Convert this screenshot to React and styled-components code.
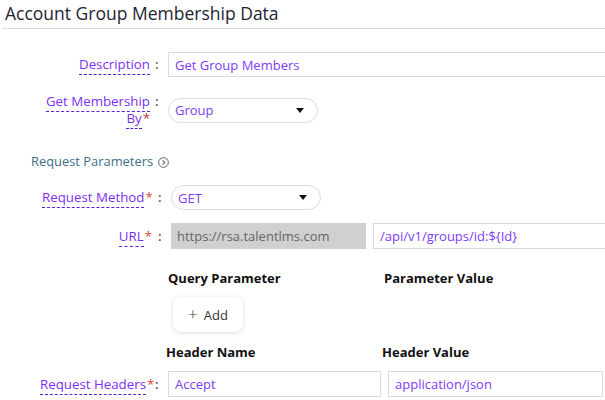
import styled, { createGlobalStyle } from "styled-components";

const GlobalStyle = createGlobalStyle`
  body {
    margin: 0;
    background: #fff;
    font-family: "Open Sans", "Liberation Sans", sans-serif;
    overflow: hidden;
  }
`;

export default function App() {
  return (
    <Page>
      <GlobalStyle />
      <Title>Account Group Membership Data</Title>

      <Row $top={23}>
        <Label>
          <LabelText>
            <Dashed>Description</Dashed>
          </LabelText>
          <Colon>:</Colon>
        </Label>
        <TextInput $width={460}>Get Group Members</TextInput>
      </Row>

      <Row $top={16}>
        <Label>
          <LabelText $wrap>
            <Dashed>Get Membership</Dashed> <Dashed>By</Dashed>
            <Star $dark>*</Star>
          </LabelText>
          <Colon>:</Colon>
        </Label>
        <Select>Group</Select>
      </Row>

      <SectionTitle>
        Request Parameters
        <svg width="11" height="11" viewBox="0 0 12 12">
          <circle cx="6" cy="6" r="5.3" fill="none" stroke="#555" strokeWidth="1" />
          <path d="M5 3.6 L7.4 6 L5 8.4" fill="none" stroke="#555" strokeWidth="1.1" />
        </svg>
      </SectionTitle>

      <Row $top={15} $labelWidth={163}>
        <Label>
          <LabelText>
            <Dashed>Request Method</Dashed>
            <Star>*</Star>
          </LabelText>
          <Colon $wide>:</Colon>
        </Label>
        <Select>GET</Select>
      </Row>

      <Row $top={13} $labelWidth={163}>
        <Label>
          <LabelText>
            <Dashed>URL</Dashed>
            <Star>*</Star>
          </LabelText>
          <Colon $wide>:</Colon>
        </Label>
        <UrlGroup>
          <BaseUrl>https://rsa.talentlms.com</BaseUrl>
          <TextInput $width={260} $height={26}>/api/v1/groups/id:${"{"}Id{"}"}</TextInput>
        </UrlGroup>
      </Row>

      <Row $top={21}>
        <span />
        <Headings>
          <Heading>Query Parameter</Heading>
          <Heading>Parameter Value</Heading>
        </Headings>
      </Row>

      <Row $top={10}>
        <span />
        <AddButton>
          <span>+</span> Add
        </AddButton>
      </Row>

      <Row $top={12}>
        <span />
        <Headings $shift={-2}>
          <Heading>Header Name</Heading>
          <Heading>Header Value</Heading>
        </Headings>
      </Row>

      <Row $top={10}>
        <Label>
          <LabelText>
            <Dashed>Request Headers</Dashed>
            <Star>*</Star>
          </LabelText>
          <Colon>:</Colon>
        </Label>
        <HeaderInputs>
          <TextInput $width={213} $height={26}>Accept</TextInput>
          <TextInput $width={215} $height={26}>application/json</TextInput>
        </HeaderInputs>
      </Row>
    </Page>
  );
}

const Page = styled.div`
  width: 605px;
  height: 400px;
  overflow: hidden;
  font-size: 13px;
`;

const Title = styled.h1`
  box-sizing: border-box;
  margin: 0 0 0 2px;
  height: 29px;
  padding-left: 3px;
  border-bottom: 1px solid #dcdcdc;
  font-size: 17.5px;
  font-weight: 400;
  line-height: 26px;
  color: #1c2433;
`;

const Row = styled.div`
  display: grid;
  grid-template-columns: ${(p) => p.$labelWidth || 160}px auto;
  column-gap: 8px;
  align-items: center;
  justify-content: start;
  margin-top: ${(p) => p.$top || 0}px;
`;

const Label = styled.div`
  display: flex;
  justify-content: flex-end;
  align-items: center;
  line-height: 17px;
`;

const LabelText = styled.div`
  max-width: 110px;
  text-align: right;
  font-size: 13.3px;
  color: #7b2ff7;
  white-space: ${(p) => (p.$wrap ? "normal" : "nowrap")};
`;

const Dashed = styled.span`
  border-bottom: 1px dashed #5a1fd6;
  padding-bottom: 1px;
`;

const Star = styled.span`
  color: ${(p) => (p.$dark ? "#b5303c" : "#e0413f")};
  margin-left: 1px;
`;

const Colon = styled.span`
  margin-left: ${(p) => (p.$wide ? 6 : 5)}px;
  width: 5px;
  color: #555;
  font-weight: 600;
  align-self: flex-start;
`;

const TextInput = styled.div`
  box-sizing: border-box;
  flex-shrink: 0;
  width: ${(p) => p.$width}px;
  height: ${(p) => p.$height || 25}px;
  border: 1px solid #dcdcdc;
  padding: 0 6px;
  display: flex;
  align-items: center;
  color: #7d3cf8;
  white-space: nowrap;
  overflow: hidden;
`;

const Select = styled.div`
  box-sizing: border-box;
  width: 150px;
  height: 25px;
  border: 1px solid #dcdcdc;
  border-radius: 13px;
  padding: 0 13px 0 6px;
  display: flex;
  align-items: center;
  justify-content: space-between;
  color: #7d3cf8;

  &::after {
    content: "";
    border-left: 4px solid transparent;
    border-right: 4px solid transparent;
    border-top: 5px solid #111;
  }
`;

const SectionTitle = styled.div`
  margin: 26px 0 0 31px;
  display: flex;
  align-items: center;
  gap: 5px;
  line-height: 17px;
  font-size: 12.9px;
  color: #3d6e87;

  svg {
    margin-top: 1px;
  }
`;

const UrlGroup = styled.div`
  display: flex;
  gap: 7px;
`;

const BaseUrl = styled.div`
  box-sizing: border-box;
  flex-shrink: 0;
  width: 195px;
  height: 26px;
  background: #d0d0d0;
  padding: 0 6px;
  display: flex;
  align-items: center;
  color: #666;
`;

const Headings = styled.div`
  display: grid;
  grid-template-columns: 216px auto;
  margin-left: ${(p) => p.$shift || 0}px;
  line-height: 17px;
`;

const Heading = styled.div`
  font-weight: 700;
  color: #111;
`;

const AddButton = styled.button`
  margin-left: 5px;
  width: 70px;
  height: 35px;
  border: none;
  border-radius: 8px;
  background: #fff;
  box-shadow: 0 1px 5px rgba(0, 0, 0, 0.14);
  font-family: inherit;
  font-size: 13px;
  color: #333;
  display: flex;
  align-items: center;
  justify-content: center;
  gap: 6px;
  padding: 0;

  span {
    font-size: 17px;
    font-weight: 300;
    color: #444;
    line-height: 1;
    margin-top: -2px;
  }
`;

const HeaderInputs = styled.div`
  display: flex;
  gap: 7px;
`;
